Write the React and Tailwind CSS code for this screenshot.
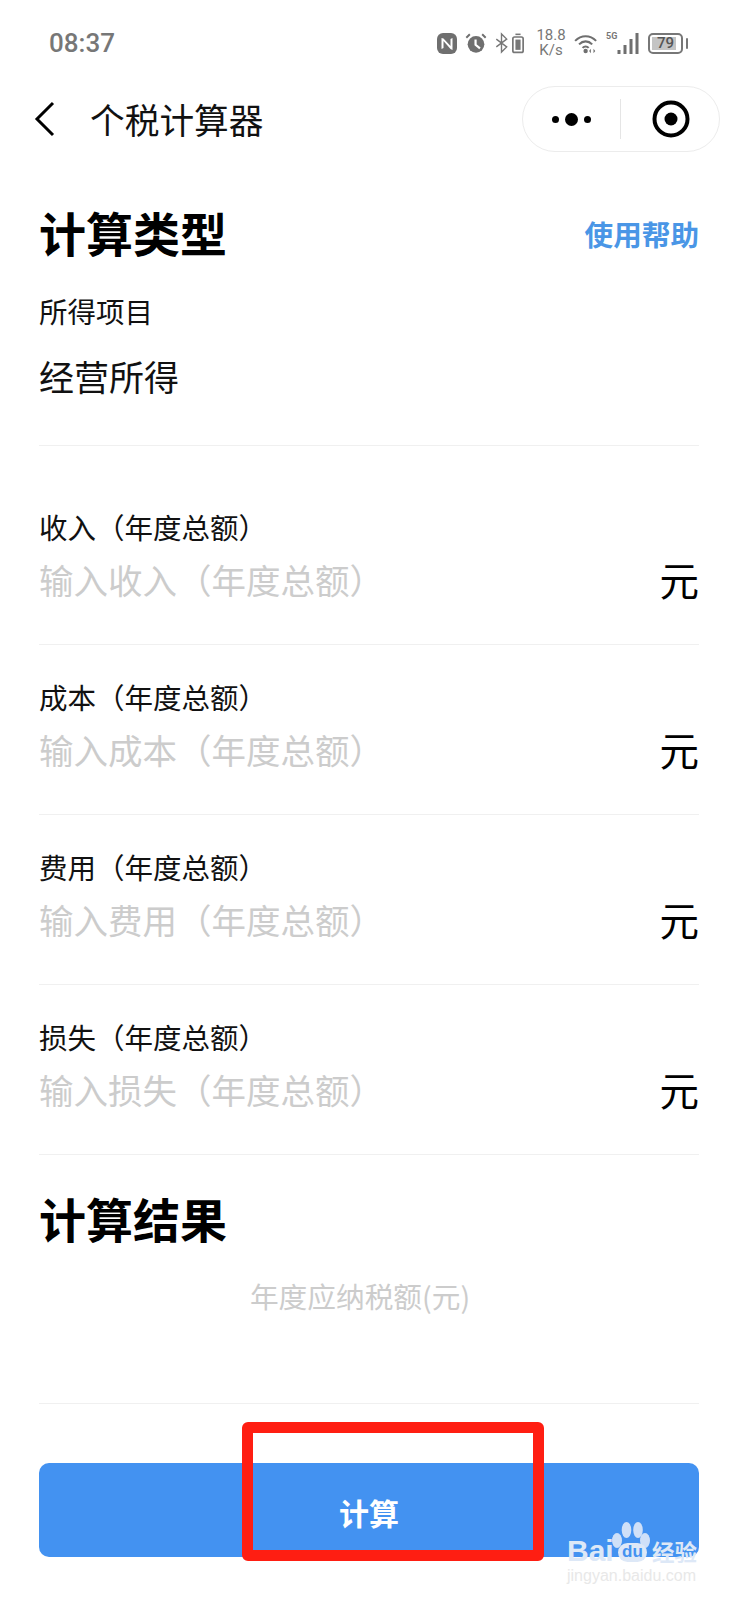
function Row({ label, placeholder, first }) {
  return (
    <div className={first ? "mt-[29px] border-b border-[#f0f0f0] h-[170px] pt-[32px] box-border" : "border-b border-[#f0f0f0] h-[170px] pt-[32px] box-border"}>
      <div className="text-[28.5px] leading-[40px] text-[#111]">{label}</div>
      <div className="flex justify-between items-center h-[52px] mt-[6px]">
        <span className="text-[34.5px] leading-[52px] text-[#cccccc]">{placeholder}</span>
        <span className="text-[39.500px] leading-[52px] text-black">元</span>
      </div>
    </div>
  );
}

function StatusIcons() {
  return (
    <div className="flex items-center text-[#777]">
      <svg width="20" height="21" viewBox="0 0 20 21" className="mr-[8px]"><rect x="0" y="0" width="20" height="21" rx="6" fill="#6f6f6f"/><path d="M4.500 5v11l2-1V8l7 8 2 1V5l-2 1v7L6.500 5.500z" fill="#fff"/></svg>
      <svg width="22" height="22" viewBox="0 0 25 24" className="mr-[8px]"><circle cx="12.500" cy="13.500" r="9.500" fill="#6f6f6f"/><path d="M12 8v6l5 4" stroke="#fff" strokeWidth="2.500" fill="none"/><path d="M1.500 6l4-4M23.500 6l-4-4" stroke="#6f6f6f" strokeWidth="2.200"/></svg>
      <svg width="13" height="22" viewBox="0 0 15 24" className="mr-[4px]"><path d="M1.500 7.500l12 9-6 6V1.500l6 6-12 9" stroke="#777" strokeWidth="1.600" fill="none"/></svg>
      <svg width="12" height="22" viewBox="0 0 14 24" className="mr-[13px]"><rect x="1" y="5" width="12" height="18" rx="2" fill="none" stroke="#777" strokeWidth="2"/><rect x="4" y="8" width="6" height="12" fill="#777"/><rect x="4" y="1" width="6" height="1.800" fill="#777"/></svg>
      <div className="flex flex-col items-center w-[28px] mr-[9px] text-[15px] leading-[15px] text-[#777] font-['Roboto',sans-serif]">
        <span>18.8</span>
        <span>K/s</span>
      </div>
      <svg width="25" height="21" viewBox="0 0 28 24" className="mr-[7px]"><path d="M1 9c7-7 17-7 24 0M5.500 13c4.500-4.500 10.500-4.500 15 0M9.500 17c2-2 5-2 7 0" stroke="#6f6f6f" strokeWidth="2.400" fill="none"/><circle cx="13" cy="20.500" r="2.500" fill="#6f6f6f"/><path d="M19 18v5l-2-2.500zM22 18v5l2-2.500z" fill="#6f6f6f"/></svg>
      <div className="flex items-end h-[22px]">
        <span className="w-[11px] text-[9px] leading-[9px] font-bold self-start font-['Roboto',sans-serif]">5G</span>
        <svg width="22" height="21" viewBox="0 0 21 21"><rect x="0" y="17" width="3" height="4" fill="#6f6f6f"/><rect x="6" y="12" width="3" height="9" fill="#6f6f6f"/><rect x="12" y="6" width="3" height="15" fill="#6f6f6f"/><rect x="18" y="0" width="3" height="21" fill="#6f6f6f"/></svg>
      </div>
      <div className="relative flex items-center justify-center w-[35px] h-[21px] ml-[9px] border-2 border-[#777] rounded-[5px] overflow-hidden">
        <div className="absolute left-[2px] top-[2px] bottom-[2px] w-[24px] bg-[#c4c4c4]"></div>
        <span className="relative text-[15px] leading-[17px] font-medium text-[#555] font-['Roboto',sans-serif]">79</span>
      </div>
      <div className="w-[2px] h-[11px] ml-[3px] bg-[#777] rounded-full"></div>
    </div>
  );
}

function Watermark() {
  return (
    <div className="absolute left-[566px] top-[1497px] w-[150px] h-[90px]">
      <svg width="38" height="28" viewBox="0 0 38 28" className="absolute left-[46px] top-[25px]">
        <ellipse cx="14.500" cy="8" rx="4.800" ry="8" fill="#cfe0f8"/>
        <ellipse cx="26" cy="8" rx="4.800" ry="8" fill="#cfe0f8"/>
        <ellipse cx="5" cy="18.500" rx="5" ry="7.500" fill="#cfe0f8"/>
        <ellipse cx="33" cy="18.500" rx="5" ry="7.500" fill="#cfe0f8"/>
      </svg>
      <span className="absolute left-[1px] top-[37px] text-[30px] leading-[34px] font-bold text-[#dde8f7] font-['Liberation_Sans',sans-serif]">Bai</span>
      <span className="absolute left-[52px] top-[46px] w-[29px] h-[19px] rounded-full bg-[#dde8f7] text-center text-[17px] leading-[18px] font-bold text-[#4392f1] font-['Liberation_Sans',sans-serif]">du</span>
      <span className="absolute left-[86px] top-[40px] text-[22.500px] leading-[28px] font-bold text-[#dde8f7]">经验</span>
      <span className="absolute left-[1px] top-[69px] text-[16px] leading-[20px] text-[#e8e8e8] font-['Liberation_Sans',sans-serif]">jingyan.baidu.com</span>
    </div>
  );
}

export default function App() {
  return (
    <div className="relative w-[738px] h-[1600px] overflow-hidden bg-white font-['Noto_Sans_CJK_SC','Noto_Sans',sans-serif] text-black">
      <div className="flex items-center justify-between h-[86px] pl-[49px] pr-[50px] box-border">
        <span className="text-[26px] leading-[32px] text-[#777] font-medium font-['Roboto',sans-serif]">08:37</span>
        <StatusIcons />
      </div>
      <div className="flex items-center h-[66px] pl-[34px] pr-[18px]">
        <svg width="22" height="36" viewBox="0 0 22 36"><path d="M19 2 3 18l16 16" stroke="#000" strokeWidth="3" fill="none"/></svg>
        <span className="ml-[34px] text-[34.700px] leading-[48px] text-[#111]">个税计算器</span>
        <div className="ml-auto flex items-center w-[198px] h-[66px] border border-[#ececec] rounded-full box-border">
          <div className="flex-1 flex items-center justify-center gap-[6px]">
            <span className="w-[7px] h-[7px] rounded-full bg-black"></span>
            <span className="w-[13px] h-[13px] rounded-full bg-black"></span>
            <span className="w-[7px] h-[7px] rounded-full bg-black"></span>
          </div>
          <div className="w-px h-[40px] bg-[#e5e5e5]"></div>
          <div className="w-[98px] flex items-center justify-center pl-[2px]">
            <svg width="38" height="38" viewBox="0 0 38 38"><circle cx="19" cy="19" r="16.500" stroke="#000" strokeWidth="4" fill="none"/><circle cx="19" cy="19" r="6.500" fill="#000"/></svg>
          </div>
        </div>
      </div>
      <main className="px-[39px] pt-[47px]">
        <div className="flex items-center justify-between h-[66px]">
          <h1 className="text-[47px] leading-[66px] font-bold">计算类型</h1>
          <span className="text-[28.600px] leading-[40px] font-bold text-[#4a96e6] mt-[4px]">使用帮助</span>
        </div>
        <div className="border-b border-[#f0f0f0] h-[181px] pt-[26px] box-border">
          <div className="text-[28.500px] leading-[40px] text-[#111]">所得项目</div>
          <div className="mt-[19px] text-[35px] leading-[52px] text-[#111]">经营所得</div>
        </div>
        <Row first label="收入（年度总额）" placeholder="输入收入（年度总额）" />
        <Row label="成本（年度总额）" placeholder="输入成本（年度总额）" />
        <Row label="费用（年度总额）" placeholder="输入费用（年度总额）" />
        <Row label="损失（年度总额）" placeholder="输入损失（年度总额）" />
        <h1 className="mt-[30px] text-[47px] leading-[66px] font-bold">计算结果</h1>
        <div className="border-b border-[#f0f0f0] h-[153px] box-border pt-[25px] pr-[18px] text-center text-[28.700px] leading-[40px] text-[#cccccc]">年度应纳税额(元)</div>
        <button className="mt-[59px] w-full h-[94px] pt-[5px] rounded-[10px] bg-[#4392f1] text-white text-[30px] font-bold">计算</button>
      </main>
      <div className="absolute left-[242px] top-[1422px] w-[302px] h-[139px] border-[11px] border-[#ff1e12] rounded-[6px] box-border"></div>
      <Watermark />
    </div>
  );
}
